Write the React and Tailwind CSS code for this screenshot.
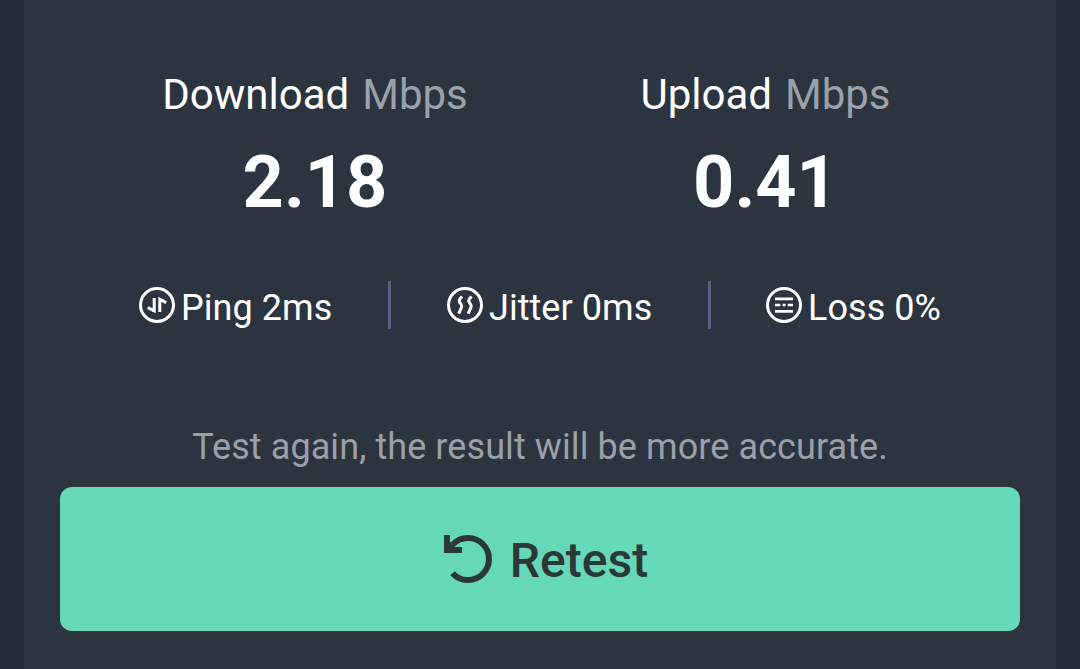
const circle = "h-9 w-9 shrink-0";

function PingIcon() {
  return (
    <svg viewBox="0 0 36 36" className={circle} fill="none" stroke="#fff" strokeWidth="3">
      <circle cx="18" cy="18" r="16.5" />
      <path d="M15.2 11V23.8L8.8 20.6M20.8 25V12.2L27.2 15.6" />
    </svg>
  );
}

function JitterIcon() {
  return (
    <svg viewBox="0 0 36 36" className={circle} fill="none" stroke="#fff" strokeWidth="3">
      <circle cx="18" cy="18" r="16.5" />
      <path d="M15 9.3L12.7 12.4Q11.7 14 12.8 15.5L14.2 17.5Q15.2 19 14.4 20.6L11.7 26.6M24.5 9.3L22.2 12.4Q21.2 14 22.3 15.5L23.7 17.5Q24.7 19 23.9 20.6L21.2 26.6" />
    </svg>
  );
}

function LossIcon() {
  return (
    <svg viewBox="0 0 36 36" className={circle} fill="none" stroke="#fff" strokeWidth="3">
      <circle cx="18" cy="18" r="16.5" />
      <path d="M9 11.8H27M9 18H14.3M16.6 18H19.6M21.7 18H27M9 24.4H27" strokeWidth="2.7" />
    </svg>
  );
}

function Result({ label, value, className }) {
  return (
    <div className={`flex flex-col items-center ${className}`}>
      <div className="flex gap-[13px] text-[42px] leading-[50px] whitespace-nowrap">
        <span>{label}</span>
        <span className="text-[#9aa1ab]">Mbps</span>
      </div>
      <div className="mt-[33px] text-[72px] leading-[60px] font-bold">{value}</div>
    </div>
  );
}

function Metric({ children }) {
  return <span className="pt-[5px] tracking-[0.05px]">{children}</span>;
}

export default function App() {
  return (
    <div className="flex h-[669px] w-[1080px] justify-center overflow-hidden bg-[#242d39] font-['Roboto',sans-serif] text-white">
      <main className="flex w-[1032px] flex-col bg-[#2c3440] px-9 pt-[70px]">
        <div className="flex h-[211px]">
          <Result label="Download" value="2.18" className="w-[510px]" />
          <Result label="Upload" value="0.41" className="w-[391px]" />
        </div>
        <div className="flex h-12 items-center text-[36px] whitespace-nowrap">
          <div className="flex w-[328px] items-center gap-1.5 pl-[79px]"><PingIcon /><Metric>Ping 2ms</Metric></div>
          <div className="h-12 w-[3px] bg-[#56627c]" />
          <div className="flex w-[317px] items-center gap-1.5 pl-[56px]"><JitterIcon /><Metric>Jitter 0ms</Metric></div>
          <div className="h-12 w-[3px] bg-[#56627c]" />
          <div className="flex items-center gap-1.5 pl-[55px]"><LossIcon /><Metric>Loss 0%</Metric></div>
        </div>
        <p className="mt-[94px] text-center text-[36px] leading-[48px] tracking-[0.09px] text-[#9a9fa8]">Test again, the result will be more accurate.</p>
        <button className="mt-[16px] flex h-36 items-center justify-center gap-[18px] rounded-xl bg-[#64d8b7] pl-[12px] text-[48px] font-medium text-[#2b3837]">
          <svg viewBox="0 0 48 48" className="h-12 w-12" fill="none" stroke="currentColor" strokeWidth="6">
            <path d="M8.5 9.8A21 21 0 1 1 8.5 38.2" />
            <path d="M0 0H6V7L11 12H18V18H0Z" fill="currentColor" stroke="none" />
          </svg>
          <span className="pt-1">Retest</span>
        </button>
      </main>
    </div>
  );
}
